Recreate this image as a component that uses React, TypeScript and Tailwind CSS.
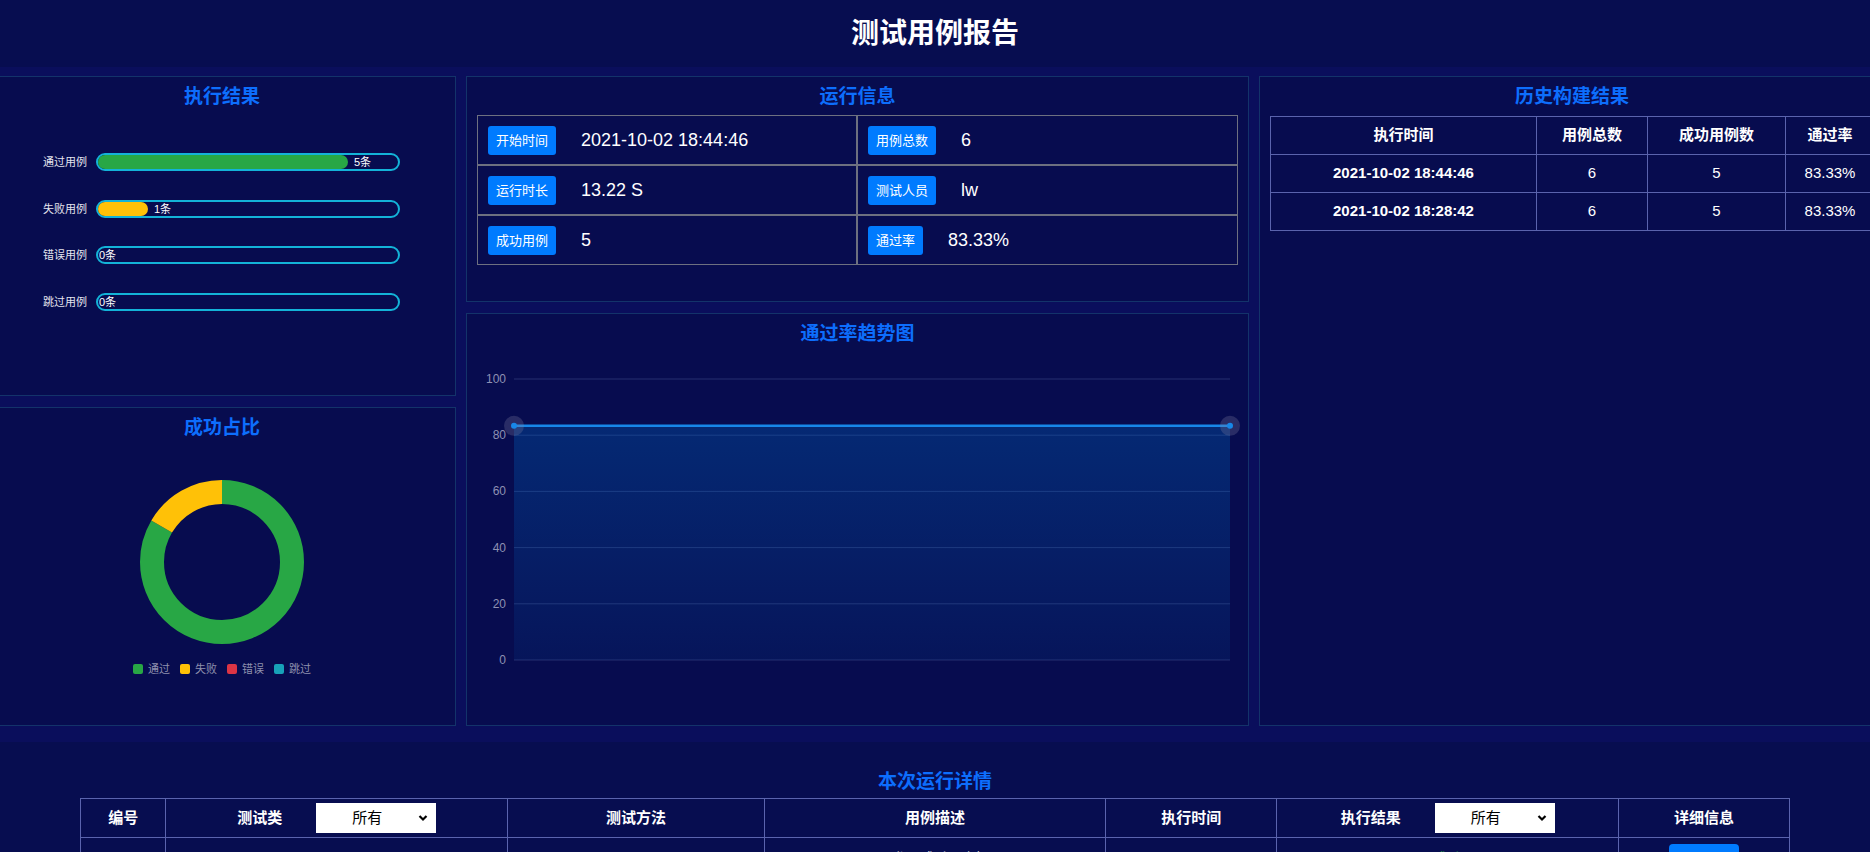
import React from "react";

type Bar = { label: string; value: number; color: string; text: string };

const total = 6;

const bars: Bar[] = [
    { label: "通过用例", value: 5, color: "bg-[#28a745]", text: "5条" },
    { label: "失败用例", value: 1, color: "bg-[#ffc107]", text: "1条" },
    { label: "错误用例", value: 0, color: "bg-[#dc3545]", text: "0条" },
    { label: "跳过用例", value: 0, color: "bg-[#17a2b8]", text: "0条" },
];

const legend = [
    { name: "通过", color: "bg-[#28a745]" },
    { name: "失败", color: "bg-[#ffc107]" },
    { name: "错误", color: "bg-[#dc3545]" },
    { name: "跳过", color: "bg-[#17a2b8]" },
];

const runInfo = [
    ["开始时间", "2021-10-02 18:44:46", "用例总数", "6"],
    ["运行时长", "13.22 S", "测试人员", "lw"],
    ["成功用例", "5", "通过率", "83.33%"],
];

const history = [
    { time: "2021-10-02 18:44:46", total: 6, success: 5, rate: "83.33%" },
    { time: "2021-10-02 18:28:42", total: 6, success: 5, rate: "83.33%" },
];

function PanelTitle({ children }: { children: React.ReactNode }) {
    return (
        <h3 className="pt-[7px] text-center text-[19px] font-bold leading-[26px] text-[#0d6efd]">
            {children}
        </h3>
    );
}

function Panel({ className, children }: { className: string; children: React.ReactNode }) {
    return <div className={`border border-[#13336a] bg-[#070c4f] ${className}`}>{children}</div>;
}

function FakeSelect() {
    return (
        <div className="flex h-[30px] w-[120px] items-center bg-white pr-[8px] text-black">
            <span className="flex-1 text-center text-[15px] font-normal leading-[30px]">所有</span>
            <svg width="10" height="8" viewBox="0 0 10 8">
                <polyline points="1.5,2 5,5.5 8.5,2" fill="none" stroke="#000" strokeWidth="2.2" />
            </svg>
        </div>
    );
}

function Donut() {
    const r = 70;
    const c = 2 * Math.PI * r;
    const pass = (5 / 6) * c;
    const fail = (1 / 6) * c;
    return (
        <svg width="166" height="166" viewBox="0 0 166 166">
            <g transform="rotate(-90 83 83)">
                <circle cx="83" cy="83" r={r} fill="none" stroke="#28a745" strokeWidth="24"
                    strokeDasharray={`${pass} ${c}`} />
                <circle cx="83" cy="83" r={r} fill="none" stroke="#ffc107" strokeWidth="24"
                    strokeDasharray={`${fail} ${c}`} strokeDashoffset={-pass} />
            </g>
        </svg>
    );
}

function TrendChart() {
    const left = 47;
    const right = 763;
    const y0 = 313;
    const step = 56.2;
    const yOf = (v: number) => y0 - (v / 20) * step;
    const dataY = yOf(83.33);
    return (
        <svg width="781" height="372" viewBox="0 0 781 372">
            <defs>
                <linearGradient id="area" x1="0" y1="0" x2="0" y2="1">
                    <stop offset="0%" stopColor="rgba(0,100,190,0.33)" />
                    <stop offset="100%" stopColor="rgba(0,100,190,0.1)" />
                </linearGradient>
            </defs>
            {[0, 20, 40, 60, 80, 100].map((v) => (
                <g key={v}>
                    <line x1={left} x2={right} y1={yOf(v)} y2={yOf(v)} stroke="#262f70" strokeWidth="1" />
                    <text x={left - 8} y={yOf(v) + 4} textAnchor="end" fontSize="12"
                        fill="#8e91b3" fontFamily="Liberation Sans, sans-serif">
                        {v}
                    </text>
                </g>
            ))}
            <rect x={left} y={dataY} width={right - left} height={y0 - dataY} fill="url(#area)" />
            <line x1={left} x2={right} y1={dataY} y2={dataY} stroke="#1787e8" strokeWidth="2.5" />
            {[left, right].map((x) => (
                <g key={x}>
                    <circle cx={x} cy={dataY} r="10" fill="rgba(130,130,160,0.28)" />
                    <circle cx={x} cy={dataY} r="3" fill="#1787e8" />
                </g>
            ))}
        </svg>
    );
}

export default function App() {
    return (
        <div className="min-h-screen overflow-x-hidden bg-[#070d50] font-['Liberation_Sans','Noto_Sans_CJK_SC',sans-serif] text-white">
            {/* Header */}
            <div className="flex h-[67px] items-center justify-center pt-[1px]">
                <h1 className="text-[28px] font-bold leading-[36px]">测试用例报告</h1>
            </div>

            {/* Panels */}
            <div className="bg-[#0a0e5c] pt-[9px] pb-[16px]">
                <div className="ml-[-12px] flex w-[1897px] gap-[10px]">
                    {/* Left column */}
                    <div className="flex w-[468px] flex-col gap-[11px]">
                        <Panel className="h-[320px]">
                            <PanelTitle>执行结果</PanelTitle>
                            <div className="mt-[43px] flex flex-col gap-[28.6px]">
                                {bars.map((b) => (
                                    <div key={b.label} className="flex h-[18px] items-center">
                                        <div className="w-[98px] text-right text-[11px] leading-[14px] text-[#e4e4ee]">
                                            {b.label}
                                        </div>
                                        <div className="ml-[9px] flex h-[18px] w-[304px] items-center rounded-full border-2 border-[#13b3d8]">
                                            <div className={`h-full rounded-full ${b.color}`}
                                                style={{ width: `${(b.value / total) * 100}%` }} />
                                            <span className={`text-[11px] leading-[14px] text-white ${b.value > 0 ? "ml-[6px]" : "ml-[1px]"}`}>
                                                {b.text}
                                            </span>
                                        </div>
                                    </div>
                                ))}
                            </div>
                        </Panel>
                        <Panel className="h-[319px]">
                            <PanelTitle>成功占比</PanelTitle>
                            <div className="mt-[38px] flex justify-center">
                                <Donut />
                            </div>
                            <div className="mt-[17px] flex justify-center gap-[10px]">
                                {legend.map((l) => (
                                    <div key={l.name} className="flex items-center gap-[5px]">
                                        <span className={`h-[10px] w-[10px] rounded-[2px] ${l.color}`} />
                                        <span className="text-[11px] leading-[14px] text-[#8f91ae]">{l.name}</span>
                                    </div>
                                ))}
                            </div>
                        </Panel>
                    </div>

                    {/* Middle column */}
                    <div className="flex w-[783px] flex-col gap-[11px]">
                        <Panel className="h-[226px] px-[10px]">
                            <PanelTitle>运行信息</PanelTitle>
                            <div className="mt-[5px] grid grid-cols-[380px_1fr]">
                                {runInfo.map((row) => (
                                    <React.Fragment key={row[0]}>
                                        {[0, 2].map((i) => (
                                            <div key={i}
                                                className="flex h-[50px] items-center border border-[#6d7080] pl-[10px]">
                                                <span className="rounded-[3px] bg-[#007bff] px-[8px] text-[13px] leading-[29px] text-white">
                                                    {row[i]}
                                                </span>
                                                <span className="ml-[25px] text-[18px] leading-[24px] text-white">
                                                    {row[i + 1]}
                                                </span>
                                            </div>
                                        ))}
                                    </React.Fragment>
                                ))}
                            </div>
                        </Panel>
                        <Panel className="h-[413px]">
                            <PanelTitle>通过率趋势图</PanelTitle>
                            <TrendChart />
                        </Panel>
                    </div>

                    {/* Right column */}
                    <Panel className="h-[650px] w-[626px] px-[10px]">
                        <PanelTitle>历史构建结果</PanelTitle>
                        <table className="mt-[6px] w-[604px] table-fixed border-collapse text-[15px]">
                            <colgroup>
                                <col className="w-[266px]" />
                                <col className="w-[111px]" />
                                <col className="w-[138px]" />
                                <col className="w-[89px]" />
                            </colgroup>
                            <thead>
                                <tr className="h-[38px]">
                                    {["执行时间", "用例总数", "成功用例数", "通过率"].map((h) => (
                                        <th key={h} className="border border-[#5a63ad] font-bold">{h}</th>
                                    ))}
                                </tr>
                            </thead>
                            <tbody>
                                {history.map((h) => (
                                    <tr key={h.time} className="h-[38px] text-center">
                                        <td className="border border-[#5a63ad] font-bold">{h.time}</td>
                                        <td className="border border-[#5a63ad]">{h.total}</td>
                                        <td className="border border-[#5a63ad]">{h.success}</td>
                                        <td className="border border-[#5a63ad]">{h.rate}</td>
                                    </tr>
                                ))}
                            </tbody>
                        </table>
                    </Panel>
                </div>
            </div>

            {/* Detail table */}
            <div className="pt-[27px] pb-[40px]">
                <h3 className="text-center text-[19px] font-bold leading-[26px] text-[#0d6efd]">本次运行详情</h3>
                <table className="mx-[80px] mt-[3px] w-[1710px] table-fixed border-collapse text-[15px]">
                    <colgroup>
                        <col className="w-[5%]" />
                        <col className="w-[20%]" />
                        <col className="w-[15%]" />
                        <col className="w-[20%]" />
                        <col className="w-[10%]" />
                        <col className="w-[20%]" />
                        <col className="w-[10%]" />
                    </colgroup>
                    <thead>
                        <tr className="h-[39px]">
                            <th className="border border-[#5a63ad] font-bold">编号</th>
                            <th className="border border-[#5a63ad] font-bold">
                                <div className="flex items-center justify-center gap-[34px]">
                                    <span>测试类</span>
                                    <FakeSelect />
                                </div>
                            </th>
                            <th className="border border-[#5a63ad] font-bold">测试方法</th>
                            <th className="border border-[#5a63ad] font-bold">用例描述</th>
                            <th className="border border-[#5a63ad] font-bold">执行时间</th>
                            <th className="border border-[#5a63ad] font-bold">
                                <div className="flex items-center justify-center gap-[34px]">
                                    <span>执行结果</span>
                                    <FakeSelect />
                                </div>
                            </th>
                            <th className="border border-[#5a63ad] font-bold">详细信息</th>
                        </tr>
                    </thead>
                    <tbody>
                        <tr className="h-[44px] text-center">
                            <td className="border border-[#5a63ad]">1</td>
                            <td className="border border-[#5a63ad]">TestDemo</td>
                            <td className="border border-[#5a63ad]">test_login</td>
                            <td className="border border-[#5a63ad]">登录成功用例</td>
                            <td className="border border-[#5a63ad] font-bold">0.01s</td>
                            <td className="border border-[#5a63ad] text-[#28a745]">成功</td>
                            <td className="border border-[#5a63ad]">
                                <button className="h-[31px] w-[70px] rounded-[4px] bg-[#007bff] text-[14px] text-white">
                                    详细
                                </button>
                            </td>
                        </tr>
                        <tr className="h-[44px] text-center">
                            <td className="border border-[#5a63ad]">2</td>
                            <td className="border border-[#5a63ad]">TestDemo</td>
                            <td className="border border-[#5a63ad]">test_logout</td>
                            <td className="border border-[#5a63ad]">退出登录用例</td>
                            <td className="border border-[#5a63ad] font-bold">0.01s</td>
                            <td className="border border-[#5a63ad] text-[#28a745]">成功</td>
                            <td className="border border-[#5a63ad]">
                                <button className="h-[31px] w-[70px] rounded-[4px] bg-[#007bff] text-[14px] text-white">
                                    详细
                                </button>
                            </td>
                        </tr>
                    </tbody>
                </table>
            </div>
        </div>
    );
}
